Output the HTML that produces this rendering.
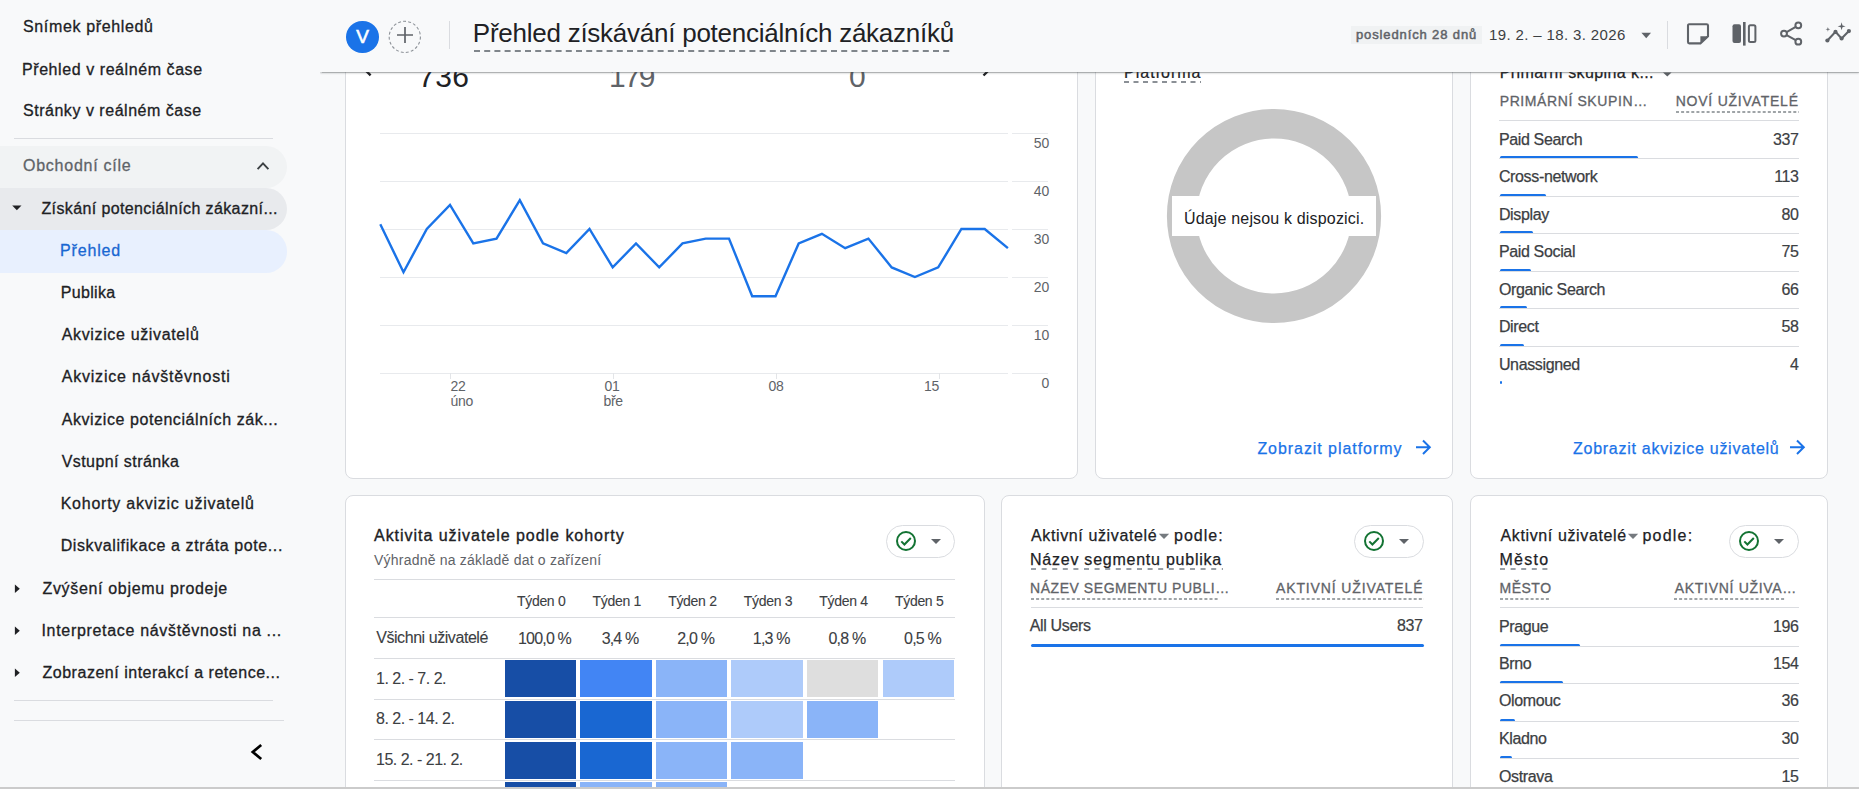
<!DOCTYPE html>
<html><head><meta charset="utf-8"><style>
html,body{margin:0;padding:0;width:1859px;height:789px;overflow:hidden;background:#f8f9fa;}
body{position:relative;font-family:"Liberation Sans", sans-serif;}
.t{position:absolute;white-space:nowrap;}
.r{position:absolute;}
</style></head><body>
<div class="r" style="left:0px;top:0px;width:1859px;height:789px;background:#f8f9fa;"></div>
<div class="r" style="left:345px;top:20px;width:733px;height:459px;background:#fff;border:1px solid #dadce0;border-radius:8px;box-sizing:border-box;"></div>
<div class="r" style="left:1095px;top:20px;width:358px;height:459px;background:#fff;border:1px solid #dadce0;border-radius:8px;box-sizing:border-box;"></div>
<div class="r" style="left:1470px;top:20px;width:358px;height:459px;background:#fff;border:1px solid #dadce0;border-radius:8px;box-sizing:border-box;"></div>
<div class="r" style="left:345px;top:495px;width:640px;height:406px;background:#fff;border:1px solid #dadce0;border-radius:8px;box-sizing:border-box;"></div>
<div class="r" style="left:1001px;top:495px;width:452px;height:406px;background:#fff;border:1px solid #dadce0;border-radius:8px;box-sizing:border-box;"></div>
<div class="r" style="left:1470px;top:495px;width:358px;height:406px;background:#fff;border:1px solid #dadce0;border-radius:8px;box-sizing:border-box;"></div>
<div id="t1" class="t" style="left:418.0px;top:60.00px;font-size:30px;line-height:34px;color:#202124;letter-spacing:0.500px;">736</div>
<div id="t2" class="t" style="left:609px;top:60.00px;font-size:30px;line-height:34px;color:#5f6368;letter-spacing:-1.800px;">179</div>
<div id="t3" class="t" style="left:849px;top:60.00px;font-size:30px;line-height:34px;color:#5f6368;">0</div>
<svg class="r" style="left:355px;top:50px;" width="30" height="30" viewBox="0 0 30 30"><polyline points="15.6,10 8,17.7 15.6,25.3" fill="none" stroke="#202124" stroke-width="2.4"/></svg>
<svg class="r" style="left:970px;top:50px;" width="30" height="30" viewBox="0 0 30 30"><polyline points="13.5,10.5 21,18 13.5,25.5" fill="none" stroke="#202124" stroke-width="2.4"/></svg>
<div class="r" style="left:380px;top:133px;width:628px;height:1px;background:#e8eaed;"></div>
<div class="r" style="left:1012px;top:133px;width:36px;height:1px;background:#e8eaed;"></div>
<div class="r" style="left:380px;top:181px;width:628px;height:1px;background:#e8eaed;"></div>
<div class="r" style="left:1012px;top:181px;width:36px;height:1px;background:#e8eaed;"></div>
<div class="r" style="left:380px;top:229px;width:628px;height:1px;background:#e8eaed;"></div>
<div class="r" style="left:1012px;top:229px;width:36px;height:1px;background:#e8eaed;"></div>
<div class="r" style="left:380px;top:277px;width:628px;height:1px;background:#e8eaed;"></div>
<div class="r" style="left:1012px;top:277px;width:36px;height:1px;background:#e8eaed;"></div>
<div class="r" style="left:380px;top:325px;width:628px;height:1px;background:#e8eaed;"></div>
<div class="r" style="left:1012px;top:325px;width:36px;height:1px;background:#e8eaed;"></div>
<div class="r" style="left:380px;top:373px;width:628px;height:1px;background:#e8eaed;"></div>
<div class="r" style="left:1012px;top:373px;width:36px;height:1px;background:#e8eaed;"></div>
<div id="t4" class="t" style="right:809.70px;text-align:right;top:135.00px;font-size:14px;line-height:16px;color:#5f6368;">50</div>
<div id="t5" class="t" style="right:809.70px;text-align:right;top:183.00px;font-size:14px;line-height:16px;color:#5f6368;">40</div>
<div id="t6" class="t" style="right:809.70px;text-align:right;top:231.00px;font-size:14px;line-height:16px;color:#5f6368;">30</div>
<div id="t7" class="t" style="right:809.70px;text-align:right;top:279.00px;font-size:14px;line-height:16px;color:#5f6368;">20</div>
<div id="t8" class="t" style="right:809.70px;text-align:right;top:327.00px;font-size:14px;line-height:16px;color:#5f6368;">10</div>
<div id="t9" class="t" style="right:809.70px;text-align:right;top:375.00px;font-size:14px;line-height:16px;color:#5f6368;">0</div>
<div class="r" style="left:450px;top:373px;width:1px;height:6px;background:#e3e5e8;"></div>
<div class="r" style="left:613px;top:373px;width:1px;height:6px;background:#e3e5e8;"></div>
<div class="r" style="left:776px;top:373px;width:1px;height:6px;background:#e3e5e8;"></div>
<div class="r" style="left:939px;top:373px;width:1px;height:6px;background:#e3e5e8;"></div>
<div id="t10" class="t" style="left:450.5px;top:378.00px;font-size:14px;line-height:16px;color:#5f6368;letter-spacing:-0.300px;">22</div>
<div id="t11" class="t" style="left:450.5px;top:393.00px;font-size:14px;line-height:16px;color:#5f6368;letter-spacing:-0.300px;">úno</div>
<div id="t12" class="t" style="left:604.5px;top:378.00px;font-size:14px;line-height:16px;color:#5f6368;letter-spacing:-0.300px;">01</div>
<div id="t13" class="t" style="left:603.5px;top:393.00px;font-size:14px;line-height:16px;color:#5f6368;letter-spacing:-0.300px;">bře</div>
<div id="t14" class="t" style="left:768.5px;top:378.00px;font-size:14px;line-height:16px;color:#5f6368;letter-spacing:-0.300px;">08</div>
<div id="t15" class="t" style="left:924px;top:378.00px;font-size:14px;line-height:16px;color:#5f6368;letter-spacing:-0.300px;">15</div>
<svg class="r" style="left:0px;top:0px;" width="1859" height="789" viewBox="0 0 1859 789"><polyline points="380.3,224.2 403.5,272.2 426.8,229.0 450.0,205.0 473.3,243.4 496.5,238.6 519.8,200.2 543.0,243.4 566.3,253.0 589.5,229.0 612.7,267.4 636.0,243.4 659.2,267.4 682.5,243.4 705.7,238.6 729.0,238.6 752.2,296.2 775.5,296.2 798.7,243.4 821.9,233.8 845.2,248.2 868.4,238.6 891.7,267.4 914.9,277.0 938.2,267.4 961.4,229.0 984.7,229.0 1007.9,248.2" fill="none" stroke="#1a73e8" stroke-width="2.4" stroke-linejoin="miter"/></svg>
<div id="t16" class="t" style="left:1124.0px;top:64.00px;font-size:16px;line-height:18px;color:#202124;letter-spacing:1.000px;-webkit-text-stroke:0.2px #202124;">Platforma</div>
<svg class="r" style="left:1124px;top:79.2px" width="77" height="6"><line x1="0" y1="3" x2="77" y2="3" stroke="#8b9096" stroke-width="2" stroke-dasharray="5 4.5"/></svg>
<svg class="r" style="left:1166px;top:108px;" width="216" height="216" viewBox="0 0 216 216"><circle cx="108" cy="108" r="92.3" fill="none" stroke="#c6c6c6" stroke-width="29.6"/></svg>
<div class="r" style="left:1172px;top:196px;width:204px;height:40px;background:#fff;"></div>
<div id="t17" class="t" style="left:1184.0px;top:210.00px;font-size:16px;line-height:18px;color:#202124;letter-spacing:0.167px;">Údaje nejsou k dispozici.</div>
<div id="t18" class="t" style="left:1257.400000000002px;top:440.00px;font-size:16px;line-height:18px;color:#1a73e8;letter-spacing:0.941px;-webkit-text-stroke:0.25px #1a73e8;">Zobrazit platformy</div>
<svg class="r" style="left:1414px;top:438px;" width="18" height="18" viewBox="0 0 18 18"><path d="M2 9.3H15.5M9 2.5L15.8 9.3L9 16" fill="none" stroke="#1a73e8" stroke-width="2"/></svg>
<div id="t19" class="t" style="left:1499.700000000001px;top:64.00px;font-size:16px;line-height:18px;color:#202124;letter-spacing:0.400px;-webkit-text-stroke:0.25px #202124;">Primární skupina k...</div>
<svg class="r" style="left:1660px;top:68px;" width="14" height="10" viewBox="0 0 14 10"><path d="M3 4.4H11.5L7.25 8.6Z" fill="#5f6368"/></svg>
<div id="t20" class="t" style="left:1499.700000000001px;top:93.00px;font-size:14px;line-height:16px;color:#5f6368;letter-spacing:0.600px;-webkit-text-stroke:0.3px #5f6368;">PRIMÁRNÍ SKUPIN…</div>
<div id="t21" class="t" style="right:60.25px;text-align:right;top:93.00px;font-size:14px;line-height:16px;color:#5f6368;letter-spacing:0.769px;-webkit-text-stroke:0.3px #5f6368;">NOVÍ UŽIVATELÉ</div>
<svg class="r" style="left:1675.5px;top:108.7px" width="123.5" height="6"><line x1="0" y1="3" x2="123.5" y2="3" stroke="#80868b" stroke-width="1.6" stroke-dasharray="3 2.1"/></svg>
<div class="r" style="left:1499px;top:120px;width:300px;height:1px;background:#dadce0;"></div>
<div id="t22" class="t" style="left:1498.9px;top:131.00px;font-size:16px;line-height:18px;color:#3c4043;letter-spacing:-0.350px;-webkit-text-stroke:0.25px #3c4043;">Paid Search</div>
<div id="t23" class="t" style="right:60.40px;text-align:right;top:131.00px;font-size:16px;line-height:18px;color:#3c4043;letter-spacing:-0.400px;-webkit-text-stroke:0.2px #3c4043;">337</div>
<div class="r" style="left:1500px;top:156.0px;width:138.0015px;height:3px;background:#1a73e8;border-radius:1.5px;"></div>
<div class="r" style="left:1499px;top:158.0px;width:300px;height:1px;background:#dadce0;"></div>
<div id="t24" class="t" style="left:1498.9px;top:168.00px;font-size:16px;line-height:18px;color:#3c4043;letter-spacing:-0.350px;-webkit-text-stroke:0.25px #3c4043;">Cross-network</div>
<div id="t25" class="t" style="right:60.40px;text-align:right;top:168.00px;font-size:16px;line-height:18px;color:#3c4043;letter-spacing:-0.400px;-webkit-text-stroke:0.2px #3c4043;">113</div>
<div class="r" style="left:1500px;top:193.5px;width:46.2735px;height:3px;background:#1a73e8;border-radius:1.5px;"></div>
<div class="r" style="left:1499px;top:195.5px;width:300px;height:1px;background:#dadce0;"></div>
<div id="t26" class="t" style="left:1498.9px;top:206.00px;font-size:16px;line-height:18px;color:#3c4043;letter-spacing:-0.350px;-webkit-text-stroke:0.25px #3c4043;">Display</div>
<div id="t27" class="t" style="right:60.40px;text-align:right;top:206.00px;font-size:16px;line-height:18px;color:#3c4043;letter-spacing:-0.400px;-webkit-text-stroke:0.2px #3c4043;">80</div>
<div class="r" style="left:1500px;top:231.0px;width:32.76px;height:3px;background:#1a73e8;border-radius:1.5px;"></div>
<div class="r" style="left:1499px;top:233.0px;width:300px;height:1px;background:#dadce0;"></div>
<div id="t28" class="t" style="left:1498.9px;top:243.00px;font-size:16px;line-height:18px;color:#3c4043;letter-spacing:-0.350px;-webkit-text-stroke:0.25px #3c4043;">Paid Social</div>
<div id="t29" class="t" style="right:60.40px;text-align:right;top:243.00px;font-size:16px;line-height:18px;color:#3c4043;letter-spacing:-0.400px;-webkit-text-stroke:0.2px #3c4043;">75</div>
<div class="r" style="left:1500px;top:268.5px;width:30.7125px;height:3px;background:#1a73e8;border-radius:1.5px;"></div>
<div class="r" style="left:1499px;top:270.5px;width:300px;height:1px;background:#dadce0;"></div>
<div id="t30" class="t" style="left:1498.9px;top:281.00px;font-size:16px;line-height:18px;color:#3c4043;letter-spacing:-0.350px;-webkit-text-stroke:0.25px #3c4043;">Organic Search</div>
<div id="t31" class="t" style="right:60.40px;text-align:right;top:281.00px;font-size:16px;line-height:18px;color:#3c4043;letter-spacing:-0.400px;-webkit-text-stroke:0.2px #3c4043;">66</div>
<div class="r" style="left:1500px;top:306.0px;width:27.026999999999997px;height:3px;background:#1a73e8;border-radius:1.5px;"></div>
<div class="r" style="left:1499px;top:308.0px;width:300px;height:1px;background:#dadce0;"></div>
<div id="t32" class="t" style="left:1498.9px;top:318.00px;font-size:16px;line-height:18px;color:#3c4043;letter-spacing:-0.350px;-webkit-text-stroke:0.25px #3c4043;">Direct</div>
<div id="t33" class="t" style="right:60.40px;text-align:right;top:318.00px;font-size:16px;line-height:18px;color:#3c4043;letter-spacing:-0.400px;-webkit-text-stroke:0.2px #3c4043;">58</div>
<div class="r" style="left:1500px;top:343.5px;width:23.750999999999998px;height:3px;background:#1a73e8;border-radius:1.5px;"></div>
<div class="r" style="left:1499px;top:345.5px;width:300px;height:1px;background:#dadce0;"></div>
<div id="t34" class="t" style="left:1498.9px;top:356.00px;font-size:16px;line-height:18px;color:#3c4043;letter-spacing:-0.350px;-webkit-text-stroke:0.25px #3c4043;">Unassigned</div>
<div id="t35" class="t" style="right:60.40px;text-align:right;top:356.00px;font-size:16px;line-height:18px;color:#3c4043;letter-spacing:-0.400px;-webkit-text-stroke:0.2px #3c4043;">4</div>
<div class="r" style="left:1500px;top:381.0px;width:1.638px;height:3px;background:#1a73e8;border-radius:1.5px;"></div>
<div id="t36" class="t" style="left:1573.0px;top:440.00px;font-size:16px;line-height:18px;color:#1a73e8;letter-spacing:0.731px;-webkit-text-stroke:0.25px #1a73e8;">Zobrazit akvizice uživatelů</div>
<svg class="r" style="left:1788px;top:438px;" width="18" height="18" viewBox="0 0 18 18"><path d="M2 9.3H15.5M9 2.5L15.8 9.3L9 16" fill="none" stroke="#1a73e8" stroke-width="2"/></svg>
<div id="t37" class="t" style="left:374.0px;top:527.00px;font-size:16px;line-height:18px;color:#202124;letter-spacing:0.968px;-webkit-text-stroke:0.35px #202124;">Aktivita uživatele podle kohorty</div>
<div id="t38" class="t" style="left:374.0px;top:552.00px;font-size:14px;line-height:16px;color:#5f6368;letter-spacing:0.212px;">Výhradně na základě dat o zařízení</div>
<div class="r" style="left:886px;top:525px;width:69px;height:33px;background:#fff;border:1px solid #dadce0;border-radius:17px;box-sizing:border-box;"></div>
<svg class="r" style="left:893.5px;top:529px;" width="24" height="24" viewBox="0 0 24 24"><circle cx="12" cy="12" r="9" fill="none" stroke="#137333" stroke-width="2"/><path d="M7.3 12.4L10.4 15.5L16.8 9" fill="none" stroke="#137333" stroke-width="2"/></svg>
<svg class="r" style="left:930px;top:536px;" width="12" height="10" viewBox="0 0 12 10"><path d="M1 3H11L6 8Z" fill="#5f6368"/></svg>
<div class="r" style="left:374px;top:579px;width:581px;height:1px;background:#dadce0;"></div>
<div id="t39" class="t" style="left:504.20px;width:74px;text-align:center;top:593.00px;font-size:14px;line-height:16px;color:#3c4043;letter-spacing:-0.300px;-webkit-text-stroke:0.1px #3c4043;">Týden 0</div>
<div id="t40" class="t" style="left:579.80px;width:74px;text-align:center;top:593.00px;font-size:14px;line-height:16px;color:#3c4043;letter-spacing:-0.300px;-webkit-text-stroke:0.1px #3c4043;">Týden 1</div>
<div id="t41" class="t" style="left:655.40px;width:74px;text-align:center;top:593.00px;font-size:14px;line-height:16px;color:#3c4043;letter-spacing:-0.300px;-webkit-text-stroke:0.1px #3c4043;">Týden 2</div>
<div id="t42" class="t" style="left:731.00px;width:74px;text-align:center;top:593.00px;font-size:14px;line-height:16px;color:#3c4043;letter-spacing:-0.300px;-webkit-text-stroke:0.1px #3c4043;">Týden 3</div>
<div id="t43" class="t" style="left:806.60px;width:74px;text-align:center;top:593.00px;font-size:14px;line-height:16px;color:#3c4043;letter-spacing:-0.300px;-webkit-text-stroke:0.1px #3c4043;">Týden 4</div>
<div id="t44" class="t" style="left:882.20px;width:74px;text-align:center;top:593.00px;font-size:14px;line-height:16px;color:#3c4043;letter-spacing:-0.300px;-webkit-text-stroke:0.1px #3c4043;">Týden 5</div>
<div class="r" style="left:374px;top:617px;width:581px;height:1px;background:#dadce0;"></div>
<div id="t45" class="t" style="left:376.19999999999976px;top:629.00px;font-size:16px;line-height:18px;color:#3c4043;letter-spacing:-0.437px;-webkit-text-stroke:0.1px #3c4043;">Všichni uživatelé</div>
<div id="t46" class="t" style="left:504.50px;width:80px;text-align:center;top:630.00px;font-size:16px;line-height:18px;color:#3c4043;letter-spacing:-0.800px;-webkit-text-stroke:0.1px #3c4043;">100,0 %</div>
<div id="t47" class="t" style="left:580.10px;width:80px;text-align:center;top:630.00px;font-size:16px;line-height:18px;color:#3c4043;letter-spacing:-0.800px;-webkit-text-stroke:0.1px #3c4043;">3,4 %</div>
<div id="t48" class="t" style="left:655.70px;width:80px;text-align:center;top:630.00px;font-size:16px;line-height:18px;color:#3c4043;letter-spacing:-0.800px;-webkit-text-stroke:0.1px #3c4043;">2,0 %</div>
<div id="t49" class="t" style="left:731.30px;width:80px;text-align:center;top:630.00px;font-size:16px;line-height:18px;color:#3c4043;letter-spacing:-0.800px;-webkit-text-stroke:0.1px #3c4043;">1,3 %</div>
<div id="t50" class="t" style="left:806.90px;width:80px;text-align:center;top:630.00px;font-size:16px;line-height:18px;color:#3c4043;letter-spacing:-0.800px;-webkit-text-stroke:0.1px #3c4043;">0,8 %</div>
<div id="t51" class="t" style="left:882.50px;width:80px;text-align:center;top:630.00px;font-size:16px;line-height:18px;color:#3c4043;letter-spacing:-0.800px;-webkit-text-stroke:0.1px #3c4043;">0,5 %</div>
<div class="r" style="left:374px;top:658px;width:581px;height:1px;background:#dadce0;"></div>
<div id="t52" class="t" style="left:376px;top:670.00px;font-size:16px;line-height:18px;color:#3c4043;letter-spacing:-0.500px;-webkit-text-stroke:0.1px #3c4043;">1. 2. - 7. 2.</div>
<div class="r" style="left:504.5px;top:660.0px;width:71.5px;height:37px;background:#174ea6;"></div>
<div class="r" style="left:580.1px;top:660.0px;width:71.5px;height:37px;background:#4285f4;"></div>
<div class="r" style="left:655.7px;top:660.0px;width:71.5px;height:37px;background:#8ab4f8;"></div>
<div class="r" style="left:731.3px;top:660.0px;width:71.5px;height:37px;background:#aecbfa;"></div>
<div class="r" style="left:806.9px;top:660.0px;width:71.5px;height:37px;background:#dedede;"></div>
<div class="r" style="left:882.5px;top:660.0px;width:71.5px;height:37px;background:#aecbfa;"></div>
<div class="r" style="left:374px;top:698.6px;width:581px;height:1px;background:#dadce0;"></div>
<div id="t53" class="t" style="left:376px;top:710.00px;font-size:16px;line-height:18px;color:#3c4043;letter-spacing:-0.500px;-webkit-text-stroke:0.1px #3c4043;">8. 2. - 14. 2.</div>
<div class="r" style="left:504.5px;top:700.8px;width:71.5px;height:37px;background:#174ea6;"></div>
<div class="r" style="left:580.1px;top:700.8px;width:71.5px;height:37px;background:#1967d2;"></div>
<div class="r" style="left:655.7px;top:700.8px;width:71.5px;height:37px;background:#8ab4f8;"></div>
<div class="r" style="left:731.3px;top:700.8px;width:71.5px;height:37px;background:#aecbfa;"></div>
<div class="r" style="left:806.9px;top:700.8px;width:71.5px;height:37px;background:#8ab4f8;"></div>
<div class="r" style="left:374px;top:739.4px;width:581px;height:1px;background:#dadce0;"></div>
<div id="t54" class="t" style="left:376px;top:751.00px;font-size:16px;line-height:18px;color:#3c4043;letter-spacing:-0.500px;-webkit-text-stroke:0.1px #3c4043;">15. 2. - 21. 2.</div>
<div class="r" style="left:504.5px;top:741.6px;width:71.5px;height:37px;background:#174ea6;"></div>
<div class="r" style="left:580.1px;top:741.6px;width:71.5px;height:37px;background:#1967d2;"></div>
<div class="r" style="left:655.7px;top:741.6px;width:71.5px;height:37px;background:#8ab4f8;"></div>
<div class="r" style="left:731.3px;top:741.6px;width:71.5px;height:37px;background:#8ab4f8;"></div>
<div class="r" style="left:374px;top:780.2px;width:581px;height:1px;background:#dadce0;"></div>
<div id="t55" class="t" style="left:376px;top:792.00px;font-size:16px;line-height:18px;color:#3c4043;letter-spacing:-0.500px;-webkit-text-stroke:0.1px #3c4043;">22. 2. - 28. 2.</div>
<div class="r" style="left:504.5px;top:782.4px;width:71.5px;height:37px;background:#174ea6;"></div>
<div class="r" style="left:580.1px;top:782.4px;width:71.5px;height:37px;background:#8ab4f8;"></div>
<div class="r" style="left:655.7px;top:782.4px;width:71.5px;height:37px;background:#8ab4f8;"></div>
<div class="r" style="left:374px;top:821.0px;width:581px;height:1px;background:#dadce0;"></div>
<div id="t56" class="t" style="left:1031.0px;top:527.00px;font-size:16px;line-height:18px;color:#202124;letter-spacing:0.625px;-webkit-text-stroke:0.25px #202124;">Aktivní uživatelé</div>
<svg class="r" style="left:1158px;top:532px;" width="12" height="10" viewBox="0 0 12 10"><path d="M0.8 1.7H11.2L6 6.9Z" fill="#757a7f"/></svg>
<div id="t57" class="t" style="left:1174.0px;top:527.00px;font-size:16px;line-height:18px;color:#202124;letter-spacing:1.000px;-webkit-text-stroke:0.25px #202124;">podle:</div>
<div id="t58" class="t" style="left:1030.0px;top:551.00px;font-size:16px;line-height:18px;color:#202124;letter-spacing:0.762px;-webkit-text-stroke:0.25px #202124;">Název segmentu publika</div>
<svg class="r" style="left:1031px;top:566.2px" width="192" height="6"><line x1="0" y1="3" x2="192" y2="3" stroke="#9aa0a6" stroke-width="2" stroke-dasharray="5 5.6"/></svg>
<div class="r" style="left:1354px;top:525px;width:70px;height:33px;background:#fff;border:1px solid #dadce0;border-radius:17px;box-sizing:border-box;"></div>
<svg class="r" style="left:1361.5px;top:529px;" width="24" height="24" viewBox="0 0 24 24"><circle cx="12" cy="12" r="9" fill="none" stroke="#137333" stroke-width="2"/><path d="M7.3 12.4L10.4 15.5L16.8 9" fill="none" stroke="#137333" stroke-width="2"/></svg>
<svg class="r" style="left:1398px;top:536px;" width="12" height="10" viewBox="0 0 12 10"><path d="M1 3H11L6 8Z" fill="#5f6368"/></svg>
<div id="t59" class="t" style="left:1030.0px;top:580.00px;font-size:14px;line-height:16px;color:#5f6368;letter-spacing:0.550px;-webkit-text-stroke:0.3px #5f6368;">NÁZEV SEGMENTU PUBLI…</div>
<svg class="r" style="left:1031px;top:595.9px" width="187" height="6"><line x1="0" y1="3" x2="187" y2="3" stroke="#80868b" stroke-width="1.6" stroke-dasharray="3 2.1"/></svg>
<div id="t60" class="t" style="right:435.61px;text-align:right;top:580.00px;font-size:14px;line-height:16px;color:#5f6368;letter-spacing:0.875px;-webkit-text-stroke:0.3px #5f6368;">AKTIVNÍ UŽIVATELÉ</div>
<svg class="r" style="left:1276px;top:595.9px" width="148" height="6"><line x1="0" y1="3" x2="148" y2="3" stroke="#80868b" stroke-width="1.6" stroke-dasharray="3 2.1"/></svg>
<div class="r" style="left:1031px;top:607px;width:392px;height:1px;background:#dadce0;"></div>
<div id="t61" class="t" style="left:1029.8px;top:617.00px;font-size:16px;line-height:18px;color:#3c4043;letter-spacing:-0.350px;-webkit-text-stroke:0.25px #3c4043;">All Users</div>
<div id="t62" class="t" style="right:436.40px;text-align:right;top:617.00px;font-size:16px;line-height:18px;color:#3c4043;letter-spacing:-0.400px;-webkit-text-stroke:0.2px #3c4043;">837</div>
<div class="r" style="left:1031px;top:643.5px;width:393px;height:3px;background:#1a73e8;border-radius:1.5px;"></div>
<div id="t63" class="t" style="left:1500.5px;top:527.00px;font-size:16px;line-height:18px;color:#202124;letter-spacing:0.625px;-webkit-text-stroke:0.25px #202124;">Aktivní uživatelé</div>
<svg class="r" style="left:1626.5px;top:532px;" width="12" height="10" viewBox="0 0 12 10"><path d="M0.8 1.7H11.2L6 6.9Z" fill="#757a7f"/></svg>
<div id="t64" class="t" style="left:1642.5px;top:527.00px;font-size:16px;line-height:18px;color:#202124;letter-spacing:1.200px;-webkit-text-stroke:0.25px #202124;">podle:</div>
<div id="t65" class="t" style="left:1499.5px;top:551.00px;font-size:16px;line-height:18px;color:#202124;letter-spacing:1.250px;-webkit-text-stroke:0.25px #202124;">Město</div>
<svg class="r" style="left:1499.5px;top:566.2px" width="49.200000000000045" height="6"><line x1="0" y1="3" x2="49.200000000000045" y2="3" stroke="#9aa0a6" stroke-width="2" stroke-dasharray="5 5.6"/></svg>
<div class="r" style="left:1729px;top:525px;width:70px;height:33px;background:#fff;border:1px solid #dadce0;border-radius:17px;box-sizing:border-box;"></div>
<svg class="r" style="left:1736.5px;top:529px;" width="24" height="24" viewBox="0 0 24 24"><circle cx="12" cy="12" r="9" fill="none" stroke="#137333" stroke-width="2"/><path d="M7.3 12.4L10.4 15.5L16.8 9" fill="none" stroke="#137333" stroke-width="2"/></svg>
<svg class="r" style="left:1773px;top:536px;" width="12" height="10" viewBox="0 0 12 10"><path d="M1 3H11L6 8Z" fill="#5f6368"/></svg>
<div id="t66" class="t" style="left:1499.5px;top:580.00px;font-size:14px;line-height:16px;color:#5f6368;letter-spacing:0.500px;-webkit-text-stroke:0.3px #5f6368;">MĚSTO</div>
<svg class="r" style="left:1499.5px;top:596.2px" width="51.5" height="6"><line x1="0" y1="3" x2="51.5" y2="3" stroke="#80868b" stroke-width="1.6" stroke-dasharray="3 2.1"/></svg>
<div id="t67" class="t" style="right:61.97px;text-align:right;top:580.00px;font-size:14px;line-height:16px;color:#5f6368;letter-spacing:0.692px;-webkit-text-stroke:0.3px #5f6368;">AKTIVNÍ UŽIVA…</div>
<svg class="r" style="left:1673.5px;top:596.2px" width="111.5" height="6"><line x1="0" y1="3" x2="111.5" y2="3" stroke="#80868b" stroke-width="1.6" stroke-dasharray="3 2.1"/></svg>
<div class="r" style="left:1499.5px;top:607px;width:299.5px;height:1px;background:#dadce0;"></div>
<div id="t68" class="t" style="left:1498.9px;top:618.00px;font-size:16px;line-height:18px;color:#3c4043;letter-spacing:-0.350px;-webkit-text-stroke:0.25px #3c4043;">Prague</div>
<div id="t69" class="t" style="right:60.40px;text-align:right;top:618.00px;font-size:16px;line-height:18px;color:#3c4043;letter-spacing:-0.400px;-webkit-text-stroke:0.2px #3c4043;">196</div>
<div class="r" style="left:1500px;top:643.5px;width:79.96799999999999px;height:3px;background:#1a73e8;border-radius:1.5px;"></div>
<div class="r" style="left:1499.5px;top:645.5px;width:299.5px;height:1px;background:#dadce0;"></div>
<div id="t70" class="t" style="left:1498.9px;top:655.00px;font-size:16px;line-height:18px;color:#3c4043;letter-spacing:-0.350px;-webkit-text-stroke:0.25px #3c4043;">Brno</div>
<div id="t71" class="t" style="right:60.40px;text-align:right;top:655.00px;font-size:16px;line-height:18px;color:#3c4043;letter-spacing:-0.400px;-webkit-text-stroke:0.2px #3c4043;">154</div>
<div class="r" style="left:1500px;top:681.0px;width:62.831999999999994px;height:3px;background:#1a73e8;border-radius:1.5px;"></div>
<div class="r" style="left:1499.5px;top:683.0px;width:299.5px;height:1px;background:#dadce0;"></div>
<div id="t72" class="t" style="left:1498.9px;top:692.00px;font-size:16px;line-height:18px;color:#3c4043;letter-spacing:-0.350px;-webkit-text-stroke:0.25px #3c4043;">Olomouc</div>
<div id="t73" class="t" style="right:60.40px;text-align:right;top:692.00px;font-size:16px;line-height:18px;color:#3c4043;letter-spacing:-0.400px;-webkit-text-stroke:0.2px #3c4043;">36</div>
<div class="r" style="left:1500px;top:718.5px;width:14.687999999999999px;height:3px;background:#1a73e8;border-radius:1.5px;"></div>
<div class="r" style="left:1499.5px;top:720.5px;width:299.5px;height:1px;background:#dadce0;"></div>
<div id="t74" class="t" style="left:1498.9px;top:730.00px;font-size:16px;line-height:18px;color:#3c4043;letter-spacing:-0.350px;-webkit-text-stroke:0.25px #3c4043;">Kladno</div>
<div id="t75" class="t" style="right:60.40px;text-align:right;top:730.00px;font-size:16px;line-height:18px;color:#3c4043;letter-spacing:-0.400px;-webkit-text-stroke:0.2px #3c4043;">30</div>
<div class="r" style="left:1500px;top:756.0px;width:12.239999999999998px;height:3px;background:#1a73e8;border-radius:1.5px;"></div>
<div class="r" style="left:1499.5px;top:758.0px;width:299.5px;height:1px;background:#dadce0;"></div>
<div id="t76" class="t" style="left:1498.9px;top:768.00px;font-size:16px;line-height:18px;color:#3c4043;letter-spacing:-0.350px;-webkit-text-stroke:0.25px #3c4043;">Ostrava</div>
<div id="t77" class="t" style="right:60.40px;text-align:right;top:768.00px;font-size:16px;line-height:18px;color:#3c4043;letter-spacing:-0.400px;-webkit-text-stroke:0.2px #3c4043;">15</div>
<div class="r" style="left:1500px;top:793.5px;width:6.119999999999999px;height:3px;background:#1a73e8;border-radius:1.5px;"></div>
<div class="r" style="left:1499.5px;top:795.5px;width:299.5px;height:1px;background:#dadce0;"></div>
<div class="r" style="left:320px;top:0px;width:1539px;height:72px;background:#f8f9fa;box-shadow:0 0.5px 2px rgba(60,64,67,.35);"></div>
<div class="r" style="left:322px;top:72px;width:1537px;height:1px;background:rgba(60,64,67,.22);"></div>
<div class="r" style="left:346.3px;top:20.7px;width:32.5px;height:32.3px;border-radius:50%;background:#1a73e8;"></div>
<div id="t78" class="t" style="left:346.10px;width:33px;text-align:center;top:26.00px;font-size:19px;line-height:22px;color:#fff;-webkit-text-stroke:0.6px #fff;">V</div>
<svg class="r" style="left:388px;top:20px;" width="34" height="34" viewBox="0 0 34 34"><circle cx="16.8" cy="16.9" r="15.6" fill="none" stroke="#8e9399" stroke-width="1.1" stroke-dasharray="2.9 2.2"/><path d="M17 7V23M9 15H25" stroke="#5f6368" stroke-width="1.7"/></svg>
<div class="r" style="left:449px;top:21px;width:1px;height:28px;background:#dadce0;"></div>
<div id="t79" class="t" style="left:472.80000000000024px;top:18.00px;font-size:26px;line-height:30px;color:#202124;letter-spacing:-0.250px;">Přehled získávání potenciálních zákazníků</div>
<svg class="r" style="left:474px;top:47.8px" width="479" height="6"><line x1="0" y1="3" x2="479" y2="3" stroke="#80868b" stroke-width="2" stroke-dasharray="6 4.2"/></svg>
<div class="r" style="left:1351px;top:26px;width:131px;height:18px;background:#f0f2f3;"></div>
<div id="t80" class="t" style="left:1356.0px;top:27.00px;font-size:13px;line-height:15px;color:#5f6368;letter-spacing:0.875px;-webkit-text-stroke:0.5px #5f6368;">posledních 28 dnů</div>
<div id="t81" class="t" style="left:1489.0px;top:26.00px;font-size:15px;line-height:17px;color:#3c4043;letter-spacing:0.368px;">19. 2. – 18. 3. 2026</div>
<svg class="r" style="left:1636px;top:28px;" width="20" height="14" viewBox="0 0 20 14"><path d="M5.4 4.7H15L10.2 10.2Z" fill="#5f6368"/></svg>
<div class="r" style="left:1667px;top:20.5px;width:1px;height:28px;background:#dadce0;"></div>
<svg class="r" style="left:1684px;top:20px;" width="28" height="28" viewBox="0 0 28 28"><path d="M4 5.6Q3.9 4.3 5.2 4.3H22.6Q24 4.3 24 5.6V16.3L16.4 23.4H5.2Q4 23.4 4 22.1Z" fill="none" stroke="#5f6368" stroke-width="2.1"/><path d="M16.4 23.4V16.3H24Z" fill="#5f6368"/></svg>
<svg class="r" style="left:1728px;top:20px;" width="32" height="28" viewBox="0 0 32 28"><rect x="4.5" y="4.3" width="8.5" height="18.8" rx="2" fill="#5f6368"/><rect x="15" y="2" width="2.6" height="23.6" fill="#5f6368"/><rect x="20.9" y="5.3" width="6.5" height="16.8" rx="1.5" fill="none" stroke="#5f6368" stroke-width="2"/></svg>
<svg class="r" style="left:1776px;top:18px;" width="30" height="30" viewBox="0 0 30 30"><circle cx="22.3" cy="7.3" r="2.9" fill="none" stroke="#5f6368" stroke-width="2"/><circle cx="8" cy="15.6" r="2.9" fill="none" stroke="#5f6368" stroke-width="2"/><circle cx="22.3" cy="23.7" r="2.9" fill="none" stroke="#5f6368" stroke-width="2"/><path d="M10.6 14.1L19.7 8.8M10.6 17.1L19.7 22.2" stroke="#5f6368" stroke-width="2"/></svg>
<svg class="r" style="left:1820px;top:18px;" width="36" height="30" viewBox="0 0 36 30"><polyline points="7.4,22.5 15.5,13.9 21.6,20.5 28.9,13.1" fill="none" stroke="#5f6368" stroke-width="2.1"/><circle cx="7.4" cy="22.5" r="2.1" fill="#5f6368"/><circle cx="15.5" cy="13.9" r="2.1" fill="#5f6368"/><circle cx="21.6" cy="20.5" r="2.1" fill="#5f6368"/><circle cx="28.9" cy="13.1" r="2.1" fill="#5f6368"/><path d="M21.6 4.3L22.5 7.4L25.6 8.3L22.5 9.2L21.6 12.3L20.7 9.2L17.6 8.3L20.7 7.4Z" fill="#5f6368"/><path d="M7.9 8.9L8.4 10.8L10.3 11.3L8.4 11.8L7.9 13.7L7.4 11.8L5.5 11.3L7.4 10.8Z" fill="#5f6368"/></svg>
<div class="r" style="left:0px;top:0px;width:320px;height:789px;background:#f8f9fa;"></div>
<div id="t82" class="t" style="left:23.0px;top:18.00px;font-size:16px;line-height:18px;color:#202124;letter-spacing:0.643px;-webkit-text-stroke:0.3px #202124;">Snímek přehledů</div>
<div id="t83" class="t" style="left:22.0px;top:61.00px;font-size:16px;line-height:18px;color:#202124;letter-spacing:0.571px;-webkit-text-stroke:0.3px #202124;">Přehled v reálném čase</div>
<div id="t84" class="t" style="left:23.0px;top:102.00px;font-size:16px;line-height:18px;color:#202124;letter-spacing:0.524px;-webkit-text-stroke:0.3px #202124;">Stránky v reálném čase</div>
<div class="r" style="left:14px;top:138px;width:259px;height:1px;background:#dadce0;"></div>
<div class="r" style="left:0px;top:146px;width:287px;height:42.2px;background:#f1f3f4;border-radius:0 21px 21px 0;"></div>
<div id="t85" class="t" style="left:23.0px;top:157.00px;font-size:16px;line-height:18px;color:#5f6368;letter-spacing:0.750px;-webkit-text-stroke:0.3px #5f6368;">Obchodní cíle</div>
<svg class="r" style="left:252px;top:156px;" width="22" height="20" viewBox="0 0 22 20"><polyline points="257.6,169.2 263,163.4 268.4,169.2" transform="translate(-252,-156)" fill="none" stroke="#3c4043" stroke-width="1.9"/></svg>
<div class="r" style="left:0px;top:188.2px;width:287px;height:42.2px;background:#e8eaed;border-radius:0 21px 21px 0;"></div>
<svg class="r" style="left:10px;top:203px;" width="14" height="10" viewBox="0 0 14 10"><path d="M2.2 2.5H11.5L6.85 7.3Z" fill="#202124"/></svg>
<div id="t86" class="t" style="left:41.39999999999997px;top:200.00px;font-size:16px;line-height:18px;color:#202124;letter-spacing:0.387px;-webkit-text-stroke:0.3px #202124;">Získání potenciálních zákazní...</div>
<div class="r" style="left:0px;top:230.4px;width:287px;height:42.2px;background:#e8f0fe;border-radius:0 21px 21px 0;"></div>
<div id="t87" class="t" style="left:60.0px;top:242.00px;font-size:16px;line-height:18px;color:#1967d2;letter-spacing:0.833px;-webkit-text-stroke:0.3px #1967d2;">Přehled</div>
<div id="t88" class="t" style="left:60.70000000000006px;top:284.00px;font-size:16px;line-height:18px;color:#202124;letter-spacing:0.333px;-webkit-text-stroke:0.3px #202124;">Publika</div>
<div id="t89" class="t" style="left:61.70000000000006px;top:326.00px;font-size:16px;line-height:18px;color:#202124;letter-spacing:0.647px;-webkit-text-stroke:0.3px #202124;">Akvizice uživatelů</div>
<div id="t90" class="t" style="left:61.70000000000006px;top:368.00px;font-size:16px;line-height:18px;color:#202124;letter-spacing:0.800px;-webkit-text-stroke:0.3px #202124;">Akvizice návštěvnosti</div>
<div id="t91" class="t" style="left:61.70000000000006px;top:411.00px;font-size:16px;line-height:18px;color:#202124;letter-spacing:0.571px;-webkit-text-stroke:0.3px #202124;">Akvizice potenciálních zák...</div>
<div id="t92" class="t" style="left:61.70000000000006px;top:453.00px;font-size:16px;line-height:18px;color:#202124;letter-spacing:0.429px;-webkit-text-stroke:0.3px #202124;">Vstupní stránka</div>
<div id="t93" class="t" style="left:60.70000000000006px;top:495.00px;font-size:16px;line-height:18px;color:#202124;letter-spacing:0.750px;-webkit-text-stroke:0.3px #202124;">Kohorty akvizic uživatelů</div>
<div id="t94" class="t" style="left:60.70000000000006px;top:537.00px;font-size:16px;line-height:18px;color:#202124;letter-spacing:0.600px;-webkit-text-stroke:0.3px #202124;">Diskvalifikace a ztráta pote...</div>
<div id="t95" class="t" style="left:42.5px;top:580.00px;font-size:16px;line-height:18px;color:#202124;letter-spacing:0.667px;-webkit-text-stroke:0.3px #202124;">Zvýšení objemu prodeje</div>
<svg class="r" style="left:12px;top:582.6px;" width="10" height="12" viewBox="0 0 10 12"><path d="M2.9 1.4V10L7.8 5.7Z" fill="#202124"/></svg>
<div id="t96" class="t" style="left:41.5px;top:622.00px;font-size:16px;line-height:18px;color:#202124;letter-spacing:0.677px;-webkit-text-stroke:0.3px #202124;">Interpretace návštěvnosti na ...</div>
<svg class="r" style="left:12px;top:624.8000000000001px;" width="10" height="12" viewBox="0 0 10 12"><path d="M2.9 1.4V10L7.8 5.7Z" fill="#202124"/></svg>
<div id="t97" class="t" style="left:42.5px;top:664.00px;font-size:16px;line-height:18px;color:#202124;letter-spacing:0.516px;-webkit-text-stroke:0.3px #202124;">Zobrazení interakcí a retence...</div>
<svg class="r" style="left:12px;top:667.0px;" width="10" height="12" viewBox="0 0 10 12"><path d="M2.9 1.4V10L7.8 5.7Z" fill="#202124"/></svg>
<div class="r" style="left:14px;top:699.5px;width:259px;height:1px;background:#dadce0;"></div>
<div class="r" style="left:14px;top:720.3px;width:270px;height:1px;background:#dadce0;"></div>
<svg class="r" style="left:246px;top:740px;" width="22" height="24" viewBox="0 0 22 24"><polyline points="261.2,745 252.8,752 261.2,759" transform="translate(-246,-740)" fill="none" stroke="#000" stroke-width="2.7"/></svg>
<div class="r" style="left:0px;top:787px;width:1859px;height:2px;background:#cbcbcb;"></div>
</body></html>
